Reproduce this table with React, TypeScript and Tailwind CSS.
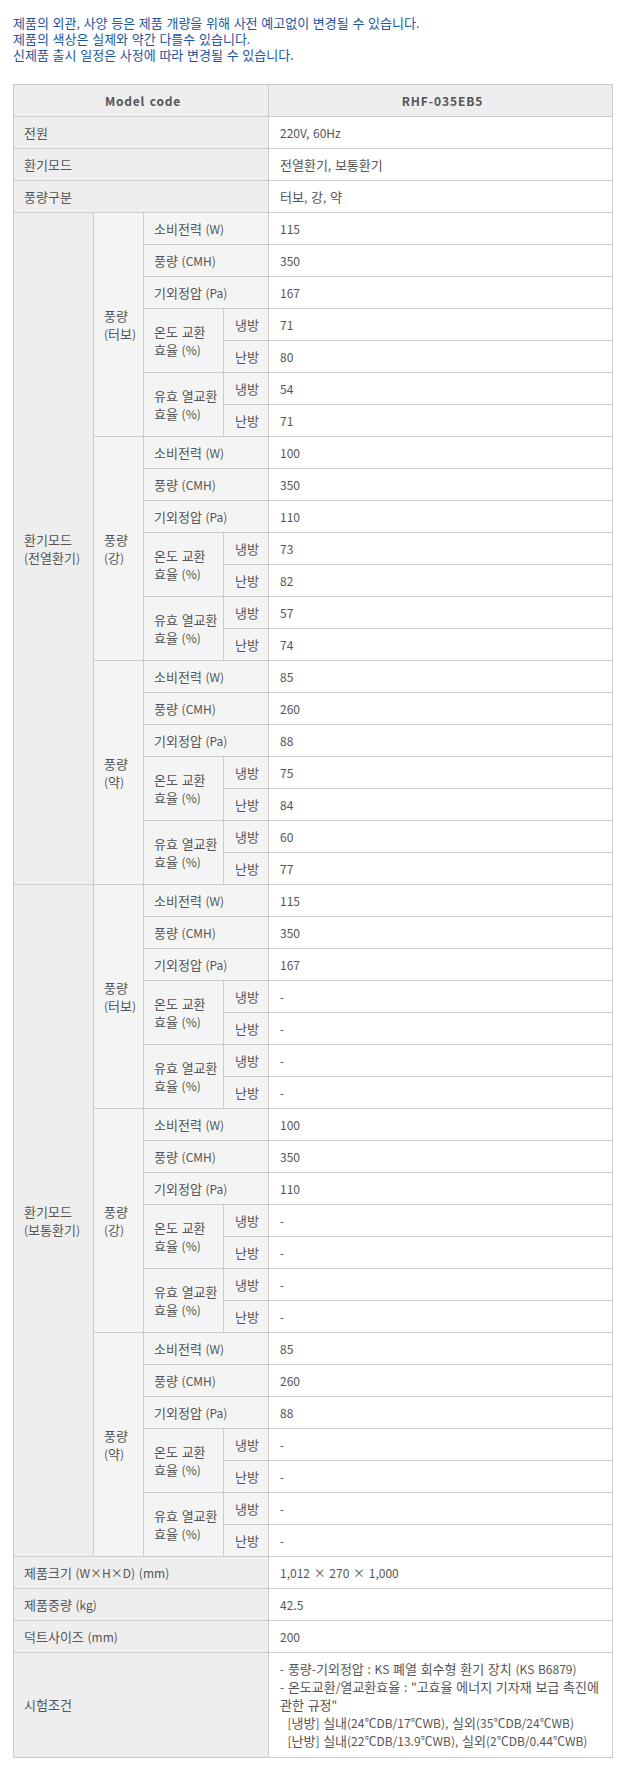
const notices = [
  "제품의 외관, 사양 등은 제품 개량을 위해 사전 예고없이 변경될 수 있습니다.",
  "제품의 색상은 실제와 약간 다를수 있습니다.",
  "신제품 출시 일정은 사정에 따라 변경될 수 있습니다.",
];

const modes = [
  {
    label: ["환기모드", "(전열환기)"],
    levels: [
      { label: ["풍량", "(터보)"], values: ["115", "350", "167", "71", "80", "54", "71"] },
      { label: ["풍량", "(강)"], values: ["100", "350", "110", "73", "82", "57", "74"] },
      { label: ["풍량", "(약)"], values: ["85", "260", "88", "75", "84", "60", "77"] },
    ],
  },
  {
    label: ["환기모드", "(보통환기)"],
    levels: [
      { label: ["풍량", "(터보)"], values: ["115", "350", "167", "-", "-", "-", "-"] },
      { label: ["풍량", "(강)"], values: ["100", "350", "110", "-", "-", "-", "-"] },
      { label: ["풍량", "(약)"], values: ["85", "260", "88", "-", "-", "-", "-"] },
    ],
  },
];

const testConditions = [
  "- 풍량-기외정압 : KS 폐열 회수형 환기 장치 (KS B6879)",
  "- 온도교환/열교환효율 : \"고효율 에너지 기자재 보급 촉진에",
  "관한 규정\"",
  "\u00a0\u00a0[냉방] 실내(24℃DB/17℃WB), 실외(35℃DB/24℃WB)",
  "\u00a0\u00a0[난방] 실내(22℃DB/13.9℃WB), 실외(2℃DB/0.44℃WB)",
];

const cell = "border border-[#cccccc] pl-[10px] pr-[6px] py-[6px] leading-[18px] text-left align-middle font-normal";
const head = "bg-[#eeeeee]";
const sub = "bg-[#f4f4f4]";
const val = "bg-white pl-[11px]";

// Hangul in the CJK font runs narrower than the original Dotum, so Hangul runs get a larger size
function T({ s }: { s: string }) {
  return (
    <>
      {s.split(/([가-힣]+)/).map((p, i) =>
        /[가-힣]/.test(p) ? (
          <span key={i} className="text-[13px] leading-none">
            {p}
          </span>
        ) : (
          p
        )
      )}
    </>
  );
}

function Lines({ lines }: { lines: string[] }) {
  return (
    <>
      {lines.map((l, i) => (
        <div key={i} className="whitespace-nowrap">
          <T s={l} />
        </div>
      ))}
    </>
  );
}

export default function App() {
  return (
    <div className="min-h-[1767px] bg-white text-[12px] text-[#555555] [word-spacing:1px] font-['Noto_Sans_CJK_KR',sans-serif]">
      {/* Notice */}
      <div className="pt-[15px] pl-[13px] leading-[16px] text-[#1c55a2]">
        {notices.map((n) => (
          <p key={n} className="whitespace-nowrap">
            <T s={n} />
          </p>
        ))}
      </div>

      {/* Spec table */}
      <table className="mt-[21px] ml-[13px] w-[600px] table-fixed border-collapse">
        <colgroup>
          <col className="w-[80px]" />
          <col className="w-[50px]" />
          <col className="w-[80px]" />
          <col className="w-[45px]" />
          <col />
        </colgroup>
        <tbody>
          <tr className="h-[32px]">
            <th colSpan={4} className={`${cell} ${head} !text-center !font-bold tracking-[0.8px]`}>
              Model code
            </th>
            <th className={`${cell} ${head} !text-center !font-bold tracking-[0.9px]`}>RHF-035EB5</th>
          </tr>
          <tr className="h-[32px]">
            <td colSpan={4} className={`${cell} ${head}`}><T s="전원" /></td>
            <td className={`${cell} ${val}`}>220V, 60Hz</td>
          </tr>
          <tr className="h-[32px]">
            <td colSpan={4} className={`${cell} ${head}`}><T s="환기모드" /></td>
            <td className={`${cell} ${val}`}><T s="전열환기, 보통환기" /></td>
          </tr>
          <tr className="h-[32px]">
            <td colSpan={4} className={`${cell} ${head}`}><T s="풍량구분" /></td>
            <td className={`${cell} ${val}`}><T s="터보, 강, 약" /></td>
          </tr>

          {modes.map((mode) =>
            mode.levels.map((level, li) => (
              <>
                <tr key={`${mode.label[1]}-${li}-0`} className="h-[32px]">
                  {li === 0 && (
                    <td rowSpan={21} className={`${cell} ${head}`}>
                      <Lines lines={mode.label} />
                    </td>
                  )}
                  <td rowSpan={7} className={`${cell} ${sub}`}>
                    <Lines lines={level.label} />
                  </td>
                  <td colSpan={2} className={`${cell} ${sub}`}><T s="소비전력 (W)" /></td>
                  <td className={`${cell} ${val}`}>{level.values[0]}</td>
                </tr>
                <tr className="h-[32px]">
                  <td colSpan={2} className={`${cell} ${sub}`}><T s="풍량 (CMH)" /></td>
                  <td className={`${cell} ${val}`}>{level.values[1]}</td>
                </tr>
                <tr className="h-[32px]">
                  <td colSpan={2} className={`${cell} ${sub}`}><T s="기외정압 (Pa)" /></td>
                  <td className={`${cell} ${val}`}>{level.values[2]}</td>
                </tr>
                <tr className="h-[32px]">
                  <td rowSpan={2} className={`${cell} ${sub}`}>
                    <Lines lines={["온도 교환", "효율 (%)"]} />
                  </td>
                  <td className={`${cell} ${sub} !pl-[11px]`}><T s="냉방" /></td>
                  <td className={`${cell} ${val}`}>{level.values[3]}</td>
                </tr>
                <tr className="h-[32px]">
                  <td className={`${cell} ${sub} !pl-[11px]`}><T s="난방" /></td>
                  <td className={`${cell} ${val}`}>{level.values[4]}</td>
                </tr>
                <tr className="h-[32px]">
                  <td rowSpan={2} className={`${cell} ${sub}`}>
                    <Lines lines={["유효 열교환", "효율 (%)"]} />
                  </td>
                  <td className={`${cell} ${sub} !pl-[11px]`}><T s="냉방" /></td>
                  <td className={`${cell} ${val}`}>{level.values[5]}</td>
                </tr>
                <tr className="h-[32px]">
                  <td className={`${cell} ${sub} !pl-[11px]`}><T s="난방" /></td>
                  <td className={`${cell} ${val}`}>{level.values[6]}</td>
                </tr>
              </>
            ))
          )}

          <tr className="h-[32px]">
            <td colSpan={4} className={`${cell} ${head}`}><T s="제품크기 (W×H×D) (mm)" /></td>
            <td className={`${cell} ${val}`}>1,012 × 270 × 1,000</td>
          </tr>
          <tr className="h-[32px]">
            <td colSpan={4} className={`${cell} ${head}`}><T s="제품중량 (kg)" /></td>
            <td className={`${cell} ${val}`}>42.5</td>
          </tr>
          <tr className="h-[32px]">
            <td colSpan={4} className={`${cell} ${head}`}><T s="덕트사이즈 (mm)" /></td>
            <td className={`${cell} ${val}`}>200</td>
          </tr>
          <tr>
            <td colSpan={4} className={`${cell} ${head}`}><T s="시험조건" /></td>
            <td className={`${cell} ${val} !py-[7px]`}>
              <Lines lines={testConditions} />
            </td>
          </tr>
        </tbody>
      </table>
    </div>
  );
}
